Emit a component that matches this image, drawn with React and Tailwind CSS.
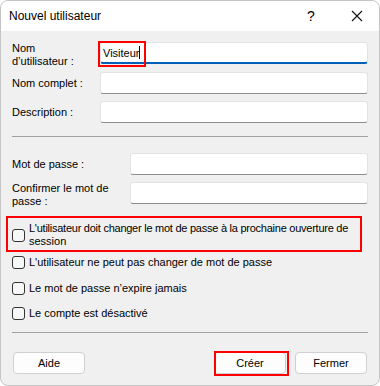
import React from "react";

const font = { fontFamily: '"Liberation Sans", Arial, sans-serif' };

function Field({ focused, value }) {
  return (
    <div
      className={
        "relative flex-1 h-[22px] bg-white border border-[#e3e3e3] rounded-[3px] " +
        (focused ? "border-b-2 border-b-[#005fb8]" : "border-b-[#8d8d8d]")
      }
    >
      {value && (
        <span className="absolute left-[2px] top-[3px] text-[11px] leading-[14px] text-black">
          {value}
          <span className="inline-block w-px h-[13px] bg-black align-top" />
        </span>
      )}
    </div>
  );
}

function Check({ children, className = "" }) {
  return (
    <div className={"flex items-center gap-[4px] " + className}>
      <div className="w-[13px] h-[13px] shrink-0 rounded-[3px] border border-[#333] bg-[#f7f7f7]" />
      <div className="text-[11px] leading-[13px] text-black whitespace-nowrap">{children}</div>
    </div>
  );
}

function Button({ children }) {
  return (
    <button className="w-[72px] h-[22px] rounded-[4px] border border-[#d0d0d0] bg-[#fdfdfd] text-[11px] text-black">
      {children}
    </button>
  );
}

export default function App() {
  return (
    <div className="w-[380px] h-[386px] bg-white" style={font}>
      <div className="relative w-[380px] h-[386px] rounded-[8px] border border-[#c4c4c4] bg-[#f0f0f0] overflow-hidden flex flex-col">
        {/* title bar */}
        <div className="h-[30px] bg-white flex items-center pl-[8px] text-[12px] text-black shrink-0">
          <span className="flex-1">Nouvel utilisateur</span>
          <span className="w-[20px] text-center text-[14px] mr-[30px]">?</span>
          <svg width="12" height="12" viewBox="0 0 12 12" className="mr-[16px]">
            <path d="M1 1L11 11M11 1L1 11" stroke="#111" strokeWidth="1.1" />
          </svg>
        </div>

        <div className="px-[11px] flex flex-col text-[11px] text-black">
          <div className="mt-[11px] h-[22px] flex items-start">
            <div className="w-[88px] leading-[13px] whitespace-nowrap">
              Nom
              <br />
              d’utilisateur :
            </div>
            <Field focused value="Visiteur" />
          </div>
          <div className="mt-[8px] h-[22px] flex items-center">
            <div className="w-[88px]">Nom complet :</div>
            <Field />
          </div>
          <div className="mt-[7px] h-[22px] flex items-center">
            <div className="w-[88px]">Description :</div>
            <Field />
          </div>

          <div className="mt-[13px] h-px bg-[#a0a0a0]" />

          <div className="mt-[16px] h-[22px] flex items-center">
            <div className="w-[118px]">Mot de passe :</div>
            <Field />
          </div>
          <div className="mt-[7px] h-[22px] flex items-start">
            <div className="w-[118px] leading-[13px] whitespace-nowrap">
              Confirmer le mot de
              <br />
              passe :
            </div>
            <Field />
          </div>

          <Check className="mt-[18px]">
            <span className="tracking-[-0.25px]">
              L'utilisateur doit changer le mot de passe à la prochaine ouverture de
            </span>
            <br />
            session
          </Check>
          <Check className="mt-[8px]">L'utilisateur ne peut pas changer de mot de passe</Check>
          <Check className="mt-[13px]">Le mot de passe n’expire jamais</Check>
          <Check className="mt-[12px]">Le compte est désactivé</Check>

          <div className="mt-[12px] h-px bg-[#a0a0a0]" />

          <div className="mt-[19px] flex items-center">
            <div className="ml-px">
              <Button>Aide</Button>
            </div>
            <div className="flex-1" />
            <Button>Créer</Button>
            <div className="w-[9px]" />
            <div className="mr-px">
              <Button>Fermer</Button>
            </div>
          </div>
        </div>

        {/* annotation boxes */}
        <div className="absolute left-[97px] top-[40px] w-[48px] h-[26px] border-2 border-[#ff0000]" />
        <div className="absolute left-[5px] top-[215px] w-[356px] h-[36px] border-2 border-[#ff0000]" />
        <div className="absolute left-[213px] top-[350px] w-[75px] h-[25px] border-2 border-[#ff0000]" />
      </div>
    </div>
  );
}
